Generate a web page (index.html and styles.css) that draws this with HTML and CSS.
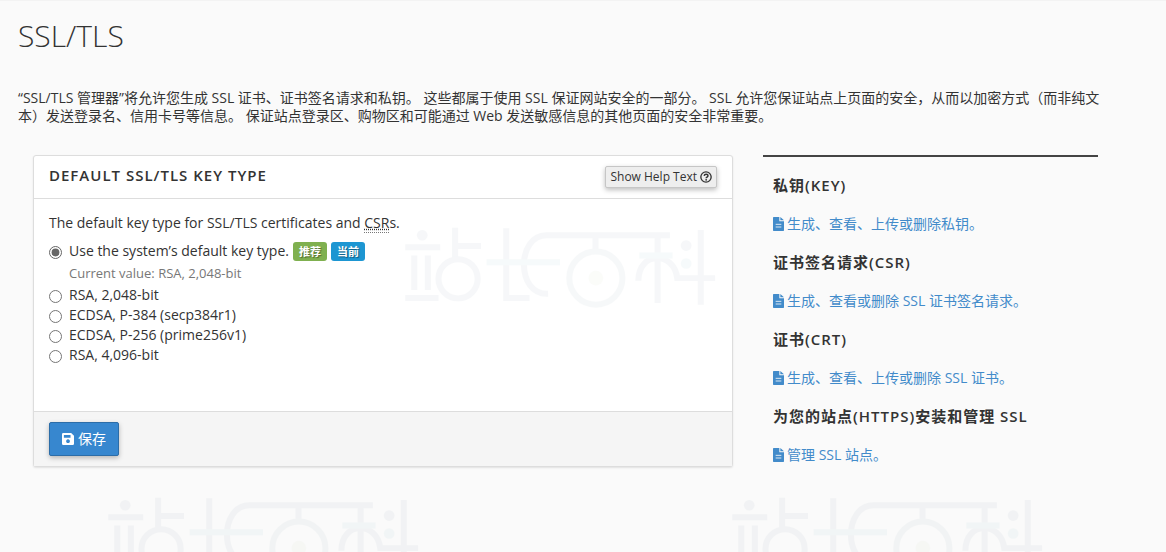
FILE: index.html
```html
<!DOCTYPE html>
<html lang="zh-CN">
<head>
<meta charset="utf-8">
<meta name="viewport" content="width=device-width, initial-scale=1">
<title>SSL/TLS</title>
<link rel="stylesheet" href="styles.css">
</head>
<body>
<svg class="defs" aria-hidden="true">
  <symbol id="icon-file" viewBox="0 0 33 42">
    <path fill="currentColor" d="M2 0h17v13h14v27q0 2-2 2H2q-2 0-2-2V2q0-2 2-2zM22 0l11 10H22z"/>
    <path stroke="#fafafa" stroke-width="2.5" d="M8 22h17M8 30h17"/>
  </symbol>
  <symbol id="logo" viewBox="0 0 945 250">
    <g fill="none" stroke-width="18">
      <circle cx="56" cy="31" r="16" fill="currentColor" stroke="none"/>
      <path stroke="#6f88a0" d="M5 67h105M32 92v104M73 92v104M5 220h100M155 8v90M155 63h78"/>
      <circle cx="164" cy="162" r="59" stroke="#6f88a0"/>
      <path stroke="#6f88a0" d="M309 10v210h70M802 31H430c-90 0-92 180 5 176M578 40v40M765 40v195M895 15v225M707 168c0-90 107-90 117-8h114"/>
      <path stroke="#78b8bf" d="M250 112h221M710 92h100"/>
      <circle cx="579" cy="160" r="80" stroke="#7898a5"/>
      <circle cx="579" cy="160" r="22" fill="#c3cfa8" stroke="none"/>
      <circle cx="851" cy="62" r="16" fill="#6f88a0" stroke="none"/>
      <circle cx="851" cy="116" r="16" fill="#78b8bf" stroke="none"/>
    </g>
  </symbol>
</svg>
<main class="page">
  <h1 class="page-title">SSL/TLS</h1>
  <p class="intro">“SSL/TLS 管理器”将允许您生成 SSL 证书、证书签名请求和私钥。 这些都属于使用 SSL 保证网站安全的一部分。 SSL 允许您保证站点上页面的安全，从而以加密方式（而非纯文本）发送登录名、信用卡号等信息。 保证站点登录区、购物区和可能通过 Web 发送敏感信息的其他页面的安全非常重要。</p>
  <div class="columns">
    <form class="panel">
      <header class="panel-head">
        <h2 class="panel-title">Default SSL/TLS Key Type</h2>
        <button type="button" class="help">Show Help Text
          <svg class="help-icon" viewBox="0 0 36 36" aria-hidden="true"><circle cx="18" cy="18" r="15.5" fill="none" stroke="currentColor" stroke-width="4"/><path d="M12.5 14.5c1-6 11.500-6 11.500 0 0 4-5.500 4-5.500 7.500" fill="none" stroke="currentColor" stroke-width="4.500"/><circle cx="18.500" cy="26.500" r="2.700" fill="currentColor"/></svg>
        </button>
      </header>
      <div class="panel-body">
        <p class="lead">The default key type for SSL/TLS certificates and <abbr title="Certificate Signing Request">CSR</abbr>s.</p>
        <div class="option">
          <input type="radio" name="key" id="k0" checked>
          <label for="k0">Use the system’s default key type.</label>
          <span class="tag tag-green">推荐</span>
          <span class="tag tag-blue">当前</span>
        </div>
        <p class="note">Current value: RSA, 2,048-bit</p>
        <div class="option"><input type="radio" name="key" id="k1"><label for="k1">RSA, 2,048-bit</label></div>
        <div class="option"><input type="radio" name="key" id="k2"><label for="k2">ECDSA, P-384 (secp384r1)</label></div>
        <div class="option"><input type="radio" name="key" id="k3"><label for="k3">ECDSA, P-256 (prime256v1)</label></div>
        <div class="option"><input type="radio" name="key" id="k4"><label for="k4">RSA, 4,096-bit</label></div>
      </div>
      <footer class="panel-foot">
        <button type="button" class="save">
          <svg class="save-icon" viewBox="0 0 38 38" aria-hidden="true"><path fill="currentColor" fill-rule="evenodd" d="M4 0h25l9 9v25q0 4-4 4H4q-4 0-4-4V4q0-4 4-4zM6 6v9h21V6zM19 20a6 6 0 1 0 .1 0z"/></svg>
          保存
        </button>
      </footer>
    </form>
    <aside class="side">
      <h3 class="side-title">私钥(KEY)</h3>
      <a class="side-link" href="#key"><svg class="file-icon" aria-hidden="true"><use href="#icon-file"/></svg>生成、查看、上传或删除私钥。</a>
      <h3 class="side-title">证书签名请求(CSR)</h3>
      <a class="side-link" href="#csr"><svg class="file-icon" aria-hidden="true"><use href="#icon-file"/></svg>生成、查看或删除 SSL 证书签名请求。</a>
      <h3 class="side-title">证书(CRT)</h3>
      <a class="side-link" href="#crt"><svg class="file-icon" aria-hidden="true"><use href="#icon-file"/></svg>生成、查看、上传或删除 SSL 证书。</a>
      <h3 class="side-title">为您的站点(HTTPS)安装和管理 SSL</h3>
      <a class="side-link" href="#sites"><svg class="file-icon" aria-hidden="true"><use href="#icon-file"/></svg>管理 SSL 站点。</a>
    </aside>
  </div>
</main>
<div class="watermarks" aria-hidden="true">
  <svg class="mark mark-a"><use href="#logo"/></svg>
  <svg class="mark mark-b"><use href="#logo"/></svg>
  <svg class="mark mark-c"><use href="#logo"/></svg>
</div>
</body>
</html>
```
FILE: styles.css
```css
* { box-sizing: border-box; }
body {
  margin: 0;
  position: relative;
  min-height: 100vh;
  background: #fafafa;
  border-top: 1px solid #f3f3f3;
  color: #333;
  font: 14px/18px "Open Sans", "Noto Sans CJK SC", sans-serif;
}
h1, h2, h3, p { margin: 0; }
.defs { position: absolute; width: 0; height: 0; }
.page { padding: 15px 53px 32px 18px; }
.page-title { font-size: 30px; line-height: 40px; font-weight: 300; }
.intro { margin-top: 33px; }
.columns {
  display: grid;
  grid-template-columns: 2fr 1fr;
  align-items: start;
  margin-top: 15px;
}
.panel {
  margin: 15px;
  background: #fff;
  border: 1px solid #ddd;
  border-radius: 3px;
  box-shadow: 0 1px 2px rgba(0, 0, 0, .1);
}
.panel-head {
  display: flex;
  justify-content: space-between;
  align-items: flex-start;
  padding: 10px 15px;
  border-bottom: 1px solid #ddd;
}
.panel-title {
  font-size: 15px;
  line-height: 18px;
  font-weight: 600;
  letter-spacing: 1px;
  text-transform: uppercase;
}
.help {
  display: flex;
  align-items: center;
  gap: 3px;
  padding: 1px 4px;
  background: #eee;
  border: 1px solid #c6c6c6;
  border-radius: 2px;
  box-shadow: 0 2px 5px rgba(0, 0, 0, .26);
  color: #333;
  font: 12px/18px "Open Sans", sans-serif;
}
.help-icon { width: 12px; height: 12px; }
.panel-body { min-height: 212px; padding: 15px; }
.lead { margin-bottom: 9px; }
abbr { text-decoration: underline dotted; border-bottom: 1px dotted #777; }
.option { display: flex; align-items: center; height: 20px; }
.option input { width: 13px; height: 13px; margin: 3px 7px 0 0; accent-color: #666; }
.tag {
  margin-left: 4px;
  padding: 0 6px;
  border-radius: 3px;
  color: #fff;
  font-size: 11px;
  line-height: 19px;
  font-weight: 700;
  text-shadow: 1px 1px 1px rgba(0, 0, 0, .4);
}
.tag-green { background: #7fb04f; }
.tag-blue { background: #1d96d2; }
.note { margin: 3px 0 3px 20px; color: #777; font-size: 13px; line-height: 18px; }
.panel-foot { padding: 10px 15px; background: #f5f5f5; border-top: 1px solid #ddd; }
.save {
  display: flex;
  align-items: center;
  gap: 4px;
  padding: 7px 12px;
  background: #3787cf;
  border: 1px solid #2c6da8;
  border-radius: 2px;
  box-shadow: 0 2px 5px rgba(0, 0, 0, .26);
  color: #fff;
  font: 14px/18px "Open Sans", "Noto Sans CJK SC", sans-serif;
}
.save-icon { width: 12px; height: 12px; }
.side { margin: 15px; padding: 10px; border-top: 2px solid #444; }
.side-title { padding: 8px 0 10px; font-size: 15px; line-height: 20px; font-weight: 600; letter-spacing: 1px; }
.side-link {
  display: flex;
  align-items: center;
  gap: 3px;
  padding: 10px 0 11px;
  color: #428bca;
  text-decoration: none;
}
.file-icon { width: 11px; height: 14px; }
.watermarks { position: absolute; inset: 0; overflow: hidden; pointer-events: none; }
.mark { position: absolute; width: 315px; height: 83px; color: #6f88a0; opacity: .06; }
.mark-a { left: 403px; top: 224px; }
.mark-b { left: 106px; top: 494px; }
.mark-c { left: 730px; top: 494px; }
```
